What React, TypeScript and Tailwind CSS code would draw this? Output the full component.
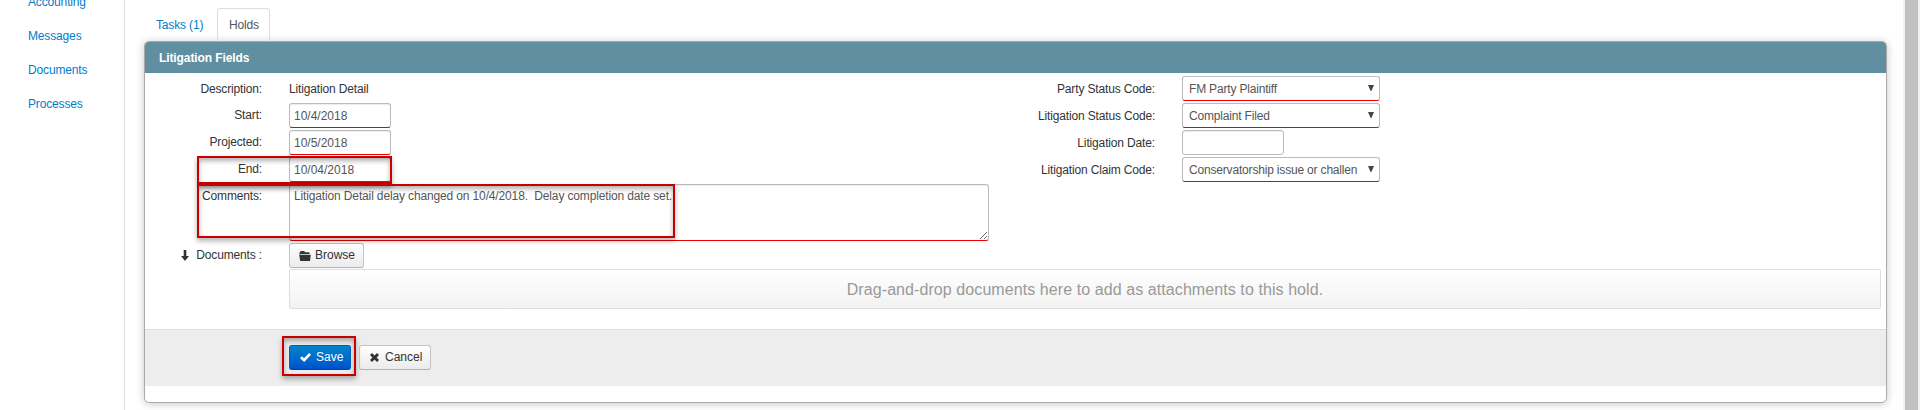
import React from 'react';

const links = ['Accounting', 'Messages', 'Documents', 'Processes'];

const dates = [
  { label: 'Start:', value: '10/4/2018', line: 'border-b-[#f00000]' },
  { label: 'Projected:', value: '10/5/2018', line: 'border-b-[#f00000]' },
  { label: 'End:', value: '10/04/2018', line: 'border-b-[#008000]' },
];

const codes = [
  { label: 'Party Status Code:', value: 'FM Party Plaintiff', select: true },
  { label: 'Litigation Status Code:', value: 'Complaint Filed', select: true },
  { label: 'Litigation Date:', value: '', select: false },
  { label: 'Litigation Claim Code:', value: 'Conservatorship issue or challen', select: true },
];

const inputClass =
  'block h-[25px] w-[102px] rounded-[3px] border border-[#bbb] bg-white px-1 text-[12px] tracking-normal text-[#555] shadow-[inset_0_1px_1px_rgba(0,0,0,0.075)] outline-none';

const buttonClass =
  'flex h-[25px] items-center rounded-[3px] border border-[#c5c5c5] border-b-[#b3b3b3] bg-linear-to-b from-white to-[#ebebeb] text-[12px] tracking-normal text-[#333]';

const ArrowIcon = () => (
  <svg width="8" height="11" viewBox="0 0 8 11" className="fill-[#333]">
    <path d="M2.7 0h2.6v6H8L4 11 0 6h2.7z" />
  </svg>
);

const FolderIcon = () => (
  <svg width="12" height="10" viewBox="0 0 12 10" className="fill-[#333]">
    <path d="M0.3 2.6 1.6 0h3.6l.8 1.2h4.2l.5 1.8H1.2L.8 4z" />
    <path d="M0.2 3.8h11.6L11 10H1.2z" />
  </svg>
);

const CheckIcon = () => (
  <svg width="11" height="9" viewBox="0 0 11 9" className="fill-white">
    <path d="M0 5.2 1.9 3.3 4 5.2 9 0l2 1.8L4.2 9z" />
  </svg>
);

const CrossIcon = () => (
  <svg width="9" height="9" viewBox="0 0 9 9" className="fill-[#333]">
    <path d="M2 0 4.5 2.4 7 0l2 2-2.4 2.5L9 7 7 9 4.5 6.6 2 9 0 7l2.4-2.5L0 2z" />
  </svg>
);

const Highlight = ({ className }: { className: string }) => (
  <div
    className={`pointer-events-none absolute z-10 border-2 border-[#c80000] shadow-[0_3px_5px_rgba(0,0,0,0.3),inset_0_3px_5px_rgba(0,0,0,0.3)] ${className}`}
  />
);

const Sidebar = () => (
  <nav className="flex w-[125px] shrink-0 flex-col border-r border-[#ddd] pl-7">
    {links.map((link, index) => (
      <a key={link} className={`h-[34px] leading-[18px] text-[#007dcc] ${index === 0 ? '-mt-[7px]' : ''}`}>
        {link}
      </a>
    ))}
  </nav>
);

const Tabs = () => (
  <div className="flex h-[33px]">
    <a className="w-[73px] pt-[8px] pl-3 leading-[18px] text-[#007dcc]">Tasks (1)</a>
    <a className="w-[53px] rounded-t-[4px] border border-b-0 border-[#ddd] pt-[7px] pl-[11px] leading-[18px] text-[#555]">
      Holds
    </a>
  </div>
);

const App: React.FC = () => {
  return (
    <div className="flex h-[410px] overflow-hidden bg-white font-['Liberation_Sans',Arial,sans-serif] text-[12px] tracking-[-0.15px] text-[#333]">
      <Sidebar />

      <main className="flex-1 pt-2 pl-[19px]">
        <Tabs />

        <section className="h-[362px] w-[1743px] rounded-[5px] border border-[#aaa] bg-white shadow-[0_1px_8px_rgba(0,0,0,0.22)]">
          <h3 className="h-[31px] rounded-t-[4px] bg-[#5f8fa1] pl-[14px] leading-[32px] font-bold tracking-[-0.1px] text-white">
            Litigation Fields
          </h3>

          <div className="flex pt-[3px]">
            <div className="relative w-[893px] pl-[23px]">
              <div className="flex h-[27px]">
                <span className="mr-[27px] w-[94px] text-right leading-[26px]">Description:</span>
                <span className="leading-[26px]">Litigation Detail</span>
              </div>
              {dates.map((date) => (
                <div key={date.label} className="flex h-[27px]">
                  <span className="mr-[27px] w-[94px] text-right leading-[24px]">{date.label}</span>
                  <input className={`${inputClass} ${date.line}`} defaultValue={date.value} />
                </div>
              ))}
              <div className="flex h-[59px]">
                <span className="mr-[27px] w-[94px] text-right leading-[24px]">Comments:</span>
                <textarea
                  className="block h-[57px] w-[700px] rounded-[3px] border border-[#bbb] border-b-[#f00000] px-1 py-[2px] leading-[18px] tracking-[-0.14px] text-[#555] shadow-[inset_0_1px_1px_rgba(0,0,0,0.075)] outline-none"
                  defaultValue="Litigation Detail delay changed on 10/4/2018.  Delay completion date set."
                />
              </div>
              <Highlight className="top-[80px] left-[52px] h-[28px] w-[195px]" />
              <Highlight className="top-[108px] left-[52px] h-[54px] w-[478px]" />
            </div>

            <div>
              {codes.map((code) => (
                <div key={code.label} className="flex h-[27px]">
                  <span className="mr-[27px] w-[117px] text-right leading-[26px] whitespace-nowrap">
                    {code.label}
                  </span>
                  {code.select ? (
                    <div className="flex h-[25px] w-[198px] items-center justify-between rounded-[3px] border border-[#bbb] border-b-[#f00000] pr-[5px] pl-[6px] text-[#555]">
                      <span className="tracking-[-0.18px] whitespace-nowrap">{code.value}</span>
                      <svg width="6" height="6" viewBox="0 0 6 6" className="-mt-px fill-[#444]">
                        <path d="M0 0h6L3.4 6h-.8z" />
                      </svg>
                    </div>
                  ) : (
                    <input className={inputClass} defaultValue={code.value} />
                  )}
                </div>
              ))}
            </div>
          </div>

          <div className="flex h-[26px]">
            <div className="mr-[27px] flex h-[25px] w-[117px] items-center justify-end gap-[7px]">
              <ArrowIcon />
              <span className="-mt-[2px]">Documents :</span>
            </div>
            <button className={`${buttonClass} w-[75px] gap-[4px] pl-[9px]`}>
              <FolderIcon />
              <span className="-mt-[2px]">Browse</span>
            </button>
          </div>
          <div className="ml-[144px] h-10 w-[1592px] rounded-[2px] border border-[#ddd] bg-linear-to-b from-white to-[#f2f2f2] text-center text-[16px] leading-[40px] tracking-[0.08px] text-[#999]">
            Drag-and-drop documents here to add as attachments to this hold.
          </div>

          <div className="relative mt-5 flex h-[57px] gap-2 border-t border-[#ddd] bg-[#ededed] pt-[15px] pl-[144px]">
            <button className="flex h-[25px] w-[62px] items-center gap-[5px] rounded-[3px] border border-[#0060c0] border-b-[#0044a8] bg-linear-to-b from-[#0085cc] to-[#0050cc] pl-[10px] text-[12px] tracking-normal text-white">
              <CheckIcon />
              <span className="-mt-[2px]">Save</span>
            </button>
            <button className={`${buttonClass} w-[72px] gap-[6px] pl-[10px]`}>
              <CrossIcon />
              <span className="-mt-[2px]">Cancel</span>
            </button>
            <Highlight className="top-[6px] left-[137px] h-10 w-[74px]" />
          </div>
        </section>
      </main>

      <div className="w-[17px] shrink-0 bg-[#f1f1f1] pl-[2px]">
        <div className="h-full w-[13px] bg-[#c1c1c1]" />
      </div>
    </div>
  );
};

export default App;
